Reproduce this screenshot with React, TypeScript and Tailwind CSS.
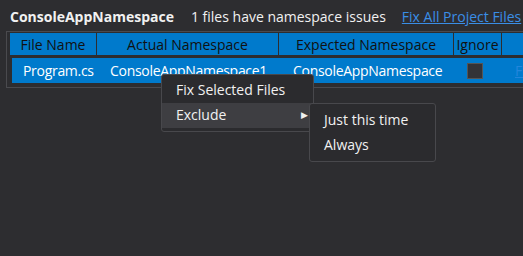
const columns = [
  { name: "File Name", width: "w-[87px]" },
  { name: "Actual Namespace", width: "w-[182px]" },
  { name: "Expected Namespace", width: "w-[175px]" },
  { name: "Ignore", width: "w-[48px]" },
];

const App = () => {
  return (
    <div className="relative w-[523px] h-[256px] overflow-hidden bg-[#2d2d30] text-[#f1f1f1] font-['Open_Sans',sans-serif]">
      <div className="flex items-baseline h-[31px] pl-[10px] pt-[6px] whitespace-nowrap text-[14px]">
        <span className="font-bold">ConsoleAppNamespace</span>
        <span className="ml-[17px]">1 files have namespace issues</span>
        <span className="ml-[16px] text-[#3a8ee6] underline">Fix All Project Files</span>
      </div>

      <div className="ml-[6px] w-[530px] h-[57px] border border-[#4a4a4e] pl-[3px] pt-[1px]">
        <div className="flex h-[22px] bg-[#007acc] text-[#111] text-[14px]">
          {columns.map((c) => (
            <div
              key={c.name}
              className={`${c.width} shrink-0 flex items-center justify-center border-r border-[#2d2d30]`}
            >
              {c.name}
            </div>
          ))}
          <div className="flex-1" />
        </div>
        <div className="flex items-center h-[25px] mt-[3px] ml-[2px] bg-[#007acc] text-white text-[14px] tracking-[-0.3px] whitespace-nowrap">
          <div className="w-[85px] shrink-0 pl-[11px]">Program.cs</div>
          <div className="w-[182px] shrink-0 pl-[13px]">ConsoleAppNamespace1</div>
          <div className="w-[175px] shrink-0 pl-[14px]">ConsoleAppNamespace</div>
          <div className="w-[48px] shrink-0 pl-[13px] flex items-center">
            <span className="w-[16px] h-[16px] bg-[#333337] border border-[#555]" />
          </div>
          <div className="pl-[13px] text-[#3a8ee6] underline opacity-60">Fix</div>
        </div>
      </div>

      <div className="absolute left-[161px] top-[74px] w-[153px] h-[58px] rounded-[3px] border border-[#48484c] bg-[#2b2b2e] text-[14px] py-[3px]">
        <div className="h-[25px] flex items-center pl-[14px] pb-[2px]">Fix Selected Files</div>
        <div className="h-[25px] flex items-center pl-[14px] pb-[2px] bg-[#3e3e42]">
          <span className="flex-1">Exclude</span>
          <span className="mr-[5px] text-[9px]">▶</span>
        </div>
      </div>

      <div className="absolute left-[309px] top-[103px] w-[127px] h-[59px] rounded-[3px] border border-[#48484c] bg-[#2b2b2e] text-[14px] py-[3px]">
        <div className="h-[25px] flex items-center pl-[14px] pb-[1px]">Just this time</div>
        <div className="h-[25px] flex items-center pl-[14px] pb-[1px]">Always</div>
      </div>
    </div>
  );
};

export default App;
